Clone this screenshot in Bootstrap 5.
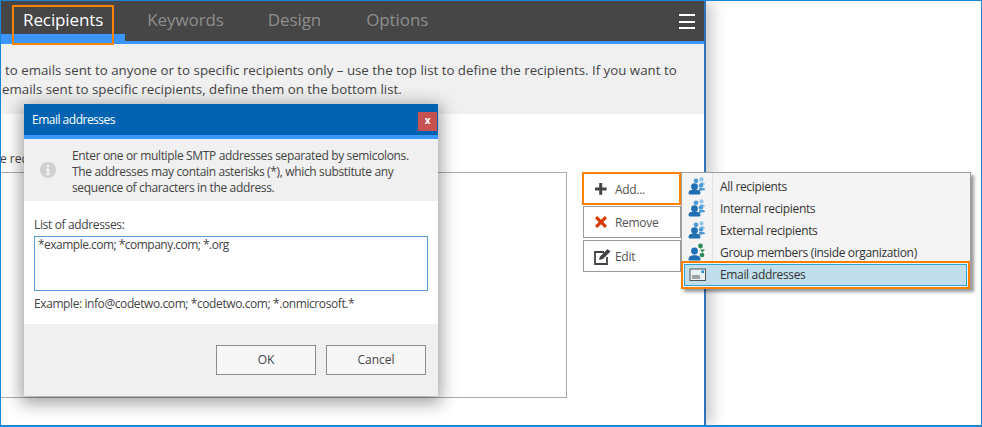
<!DOCTYPE html>
<html lang="en">
<head>
<meta charset="utf-8">
<title>Email addresses</title>
<link href="https://cdn.jsdelivr.net/npm/bootstrap@5.3.0/dist/css/bootstrap.min.css" rel="stylesheet">
<style>
html,body{margin:0;height:427px;overflow:hidden;background:#fff}
body{font-family:"Open Sans","Noto Sans",sans-serif;color:#444}
.frame{width:982px;height:427px;border:1px solid #1b86d8;border-bottom-width:2px;position:relative;overflow:hidden;background:#fff}
.win{width:705px;height:100%;border-right:2px solid #2d75b5;background:#fff;box-shadow:6px 0 14px rgba(0,0,0,.22);position:relative}
.tabbar{height:43px;background:#464646;border-bottom:3px solid #3b96ff;padding-left:22px;position:relative}
.tabtxt{font-size:17px;color:#8e8e8e;line-height:37px;letter-spacing:-.1px}
.tabtxt.on{color:#fff}
.tabtxt.t2{margin-left:44px}.tabtxt.t3{margin-left:44px}.tabtxt.t4{margin-left:45px}
.tabmark{position:absolute;left:0;bottom:0;width:124px;height:7px;background:#3b96ff}
.tabbox{position:absolute;left:11px;top:4px;width:102px;height:40px;border:2px solid #fb8100}
.burger{position:absolute;left:678px;top:13px;width:16px;height:15px;border-top:2px solid #fff;border-bottom:2px solid #fff}
.burger::after{content:"";display:block;height:2px;background:#fff;margin-top:4.5px}
.intro{height:70px;background:#f0f0f0;padding:17px 0 0 4px;font-size:13.3px;line-height:19px}
.intro .l2{margin-left:-3px}
.mainrow{padding-top:58px;display:flex}
.listbox{width:566px;height:226px;border:1px solid #a9a9a9;border-left:0;position:relative;background:#fff}
.cliptxt{position:absolute;left:-1px;top:-23px;font-size:12px;white-space:nowrap}
.acts{margin-left:16px;width:98px;display:flex;flex-direction:column}
.actbtn{width:98px;height:32px;border:1px solid #9b9b9b;background:#fff;font-size:12px;letter-spacing:-.3px;display:flex;align-items:center;padding:2px 0 0 10px;margin-bottom:2px;border-radius:0;color:#555}
.actbtn svg{margin-right:7px;flex:none;margin-top:-2px}
.actbtn .ed{margin-right:4px}
.actbtn.hot{border:2px solid #fb8100;margin-left:-1px;width:99px;height:33px;margin-bottom:1px}
.popmenu{position:absolute;left:680px;top:171px;width:290px;height:117px;background:#f4f4f4;border:1px solid #a0a0a0;box-shadow:3px 3px 3px rgba(0,0,0,.4);padding-top:3px;letter-spacing:-.34px}
.popmenu::before{content:"";position:absolute;left:30px;top:0;bottom:0;width:1px;background:#e2e2e2}
.mi{height:22px;display:flex;align-items:center;font-size:12px;color:#333;padding-left:6px}
.mi svg{flex:none;margin-right:14px;width:18px;height:18px;margin-top:-3px}
.mi.sel{position:absolute;left:-1px;bottom:-1px;width:289px;height:28px;border:2px solid #fb8100;padding:0}
.mi.sel > div{flex:1;display:flex;align-items:center;padding-left:4px;margin:1px;background:#c1deec;border:1px solid #2ea4d6;height:22px}
.mi.sel svg{margin-top:0;margin-right:13px}
.dlg{position:absolute;left:23px;top:103px;width:414px;height:292px;box-shadow:0 4px 16px 3px rgba(0,0,0,.38);background:#fff;display:flex;flex-direction:column;letter-spacing:-.35px}
.dlghead{height:35px;background:#0063b1;border-bottom:4px solid #3b96ff;color:#fff;font-size:12px;padding:7px 0 0 8px;position:relative;letter-spacing:-.5px}
.dlgx{position:absolute;right:1px;top:8px;width:19px;height:19px;background:#c75050;color:#fff;font-size:10px;font-weight:700;line-height:17px;text-align:center}
.dlginfo{height:62px;background:#f0f0f0;display:flex;align-items:center;padding:3px 0 0 16px;font-size:12px;line-height:16px}
.dlginfo svg{margin-right:16px;flex:none;margin-top:-3px}
.dlgbody{height:123px;padding:15px 10px 0;font-size:12px}
.addr{width:394px;height:55px;border:1px solid #5b9bd5;padding:0 3px;margin-top:2px;color:#444;line-height:15px;letter-spacing:-.52px}
.hint{margin-top:4px;letter-spacing:-.41px}
.dlgfoot{flex:1;background:#f0f0f0;display:flex;justify-content:flex-end;gap:10px;padding:21px 12px 0 0}
.dlgbtn{width:100px;height:30px;border:1px solid #8c8c8c;background:#f7f7f7;font-size:12px;border-radius:0;padding:0;color:#444}
</style>
</head>
<body>
<svg width="0" height="0" class="d-none">
  <symbol id="ppl" viewBox="0 0 18 18">
    <circle cx="13.500" cy="2.400" r="2.100" fill="#8fc3e8"/><path d="M12.500 5c2.500 0 4.500.8 4.500 2.500l-4 .8z" fill="#8fc3e8"/>
    <circle cx="13" cy="8.500" r="2.300" fill="#4f9bd6"/><path d="M11 11h4c1.300 0 2 .8 2 2l-6 1z" fill="#4f9bd6"/>
    <circle cx="8" cy="3.800" r="2.400" fill="#4f9bd6"/>
    <circle cx="6.500" cy="9.600" r="3.400" fill="#1f6fb2"/><path d="M.5 16c0-2.500 2.300-3.500 6-3.500s6 1 6 3.500c0 .9-.6 1.500-1.300 1.500H1.800C1.100 17.500.5 16.900.5 16z" fill="#1f6fb2"/>
  </symbol>
</svg>
<div class="frame">
  <div class="win">
    <div class="tabbar d-flex">
      <span class="tabtxt on">Recipients</span>
      <span class="tabtxt t2">Keywords</span>
      <span class="tabtxt t3">Design</span>
      <span class="tabtxt t4">Options</span>
      <div class="tabmark"></div>
      <div class="tabbox"></div>
      <div class="burger"></div>
    </div>
    <div class="intro">
      <div class="text-nowrap">to emails sent to anyone or to specific recipients only – use the top list to define the recipients. If you want to</div>
      <div class="text-nowrap l2">emails sent to specific recipients, define them on the bottom list.</div>
    </div>
    <div class="mainrow">
      <div class="listbox"><span class="cliptxt">e recipients</span></div>
      <div class="acts">
        <div class="actbtn hot"><svg width="14" height="14" viewBox="0 0 14 14"><path d="M5.200 1h3v4.400h4.400v3H8.200v4.400h-3V8.400H1v-3h4.200z" fill="#444"/></svg>Add...</div>
        <div class="actbtn"><svg width="14" height="14" viewBox="0 0 14 14"><path d="M1 3.200 3.200 1 7 4.800 10.800 1 13 3.200 9.200 7 13 10.800 10.800 13 7 9.200 3.200 13 1 10.800 4.800 7z" fill="#d83b01"/></svg>Remove</div>
        <div class="actbtn"><svg class="ed" width="17" height="17" viewBox="0 0 17 17"><path d="M1 4h9M1 3v13h12V9" fill="none" stroke="#444" stroke-width="1.800"/><path d="M5 12l1-3.500L13.500 1l3 2.500L9 11z" fill="#444"/></svg>Edit</div>
      </div>
    </div>
  </div>
  <div class="popmenu">
    <div class="mi"><svg><use href="#ppl"/></svg>All recipients</div>
    <div class="mi"><svg><use href="#ppl"/></svg>Internal recipients</div>
    <div class="mi"><svg><use href="#ppl"/></svg>External recipients</div>
    <div class="mi"><svg viewBox="0 0 18 18"><circle cx="12.500" cy="3" r="2.400" fill="#2e8b57"/><path d="M12 6.500h5l-2.500 3z" fill="#2e8b57"/><circle cx="14" cy="12" r="2.300" fill="#2e8b57"/><circle cx="6.500" cy="8" r="3.400" fill="#1f6fb2"/><path d="M.5 16.500c0-3 2.300-4.300 6-4.300s6 1.300 6 4.300c0 .6-.5 1-1 1h-10c-.5 0-1-.4-1-1z" fill="#1f6fb2"/></svg>Group members (inside organization)</div>
    <div class="mi sel"><div><svg viewBox="0 0 18 18"><rect x="1" y="3" width="15.500" height="11.500" fill="#e9f0f4" stroke="#555"/><path d="M3 10h8M3 12h8" stroke="#555"/><rect x="12.500" y="4.500" width="2.500" height="2.500" fill="#1b86d8"/></svg>Email addresses</div></div>
  </div>
  <div class="dlg">
    <div class="dlghead">Email addresses<div class="dlgx">x</div></div>
    <div class="dlginfo">
      <svg width="16" height="16" viewBox="0 0 16 16"><circle cx="8" cy="8" r="8" fill="#cfcfcf"/><rect x="6.700" y="2.800" width="2.600" height="2.400" fill="#f0f0f0"/><path d="M6 6.500h3.300v5.300h1v1.400H5.800v-1.400h1V7.900H6z" fill="#f0f0f0"/></svg>
      <div>Enter one or multiple SMTP addresses separated by semicolons.<br>The addresses may contain asterisks (*), which substitute any<br>sequence of characters in the address.</div>
    </div>
    <div class="dlgbody">
      <div>List of addresses:</div>
      <div class="addr">*example.com; *company.com; *.org</div>
      <div class="hint">Example: info@codetwo.com; *codetwo.com; *.onmicrosoft.*</div>
    </div>
    <div class="dlgfoot">
      <button class="btn dlgbtn">OK</button>
      <button class="btn dlgbtn">Cancel</button>
    </div>
  </div>
</div>
<script src="https://cdn.jsdelivr.net/npm/bootstrap@5.3.0/dist/js/bootstrap.bundle.min.js"></script>
</body>
</html>
